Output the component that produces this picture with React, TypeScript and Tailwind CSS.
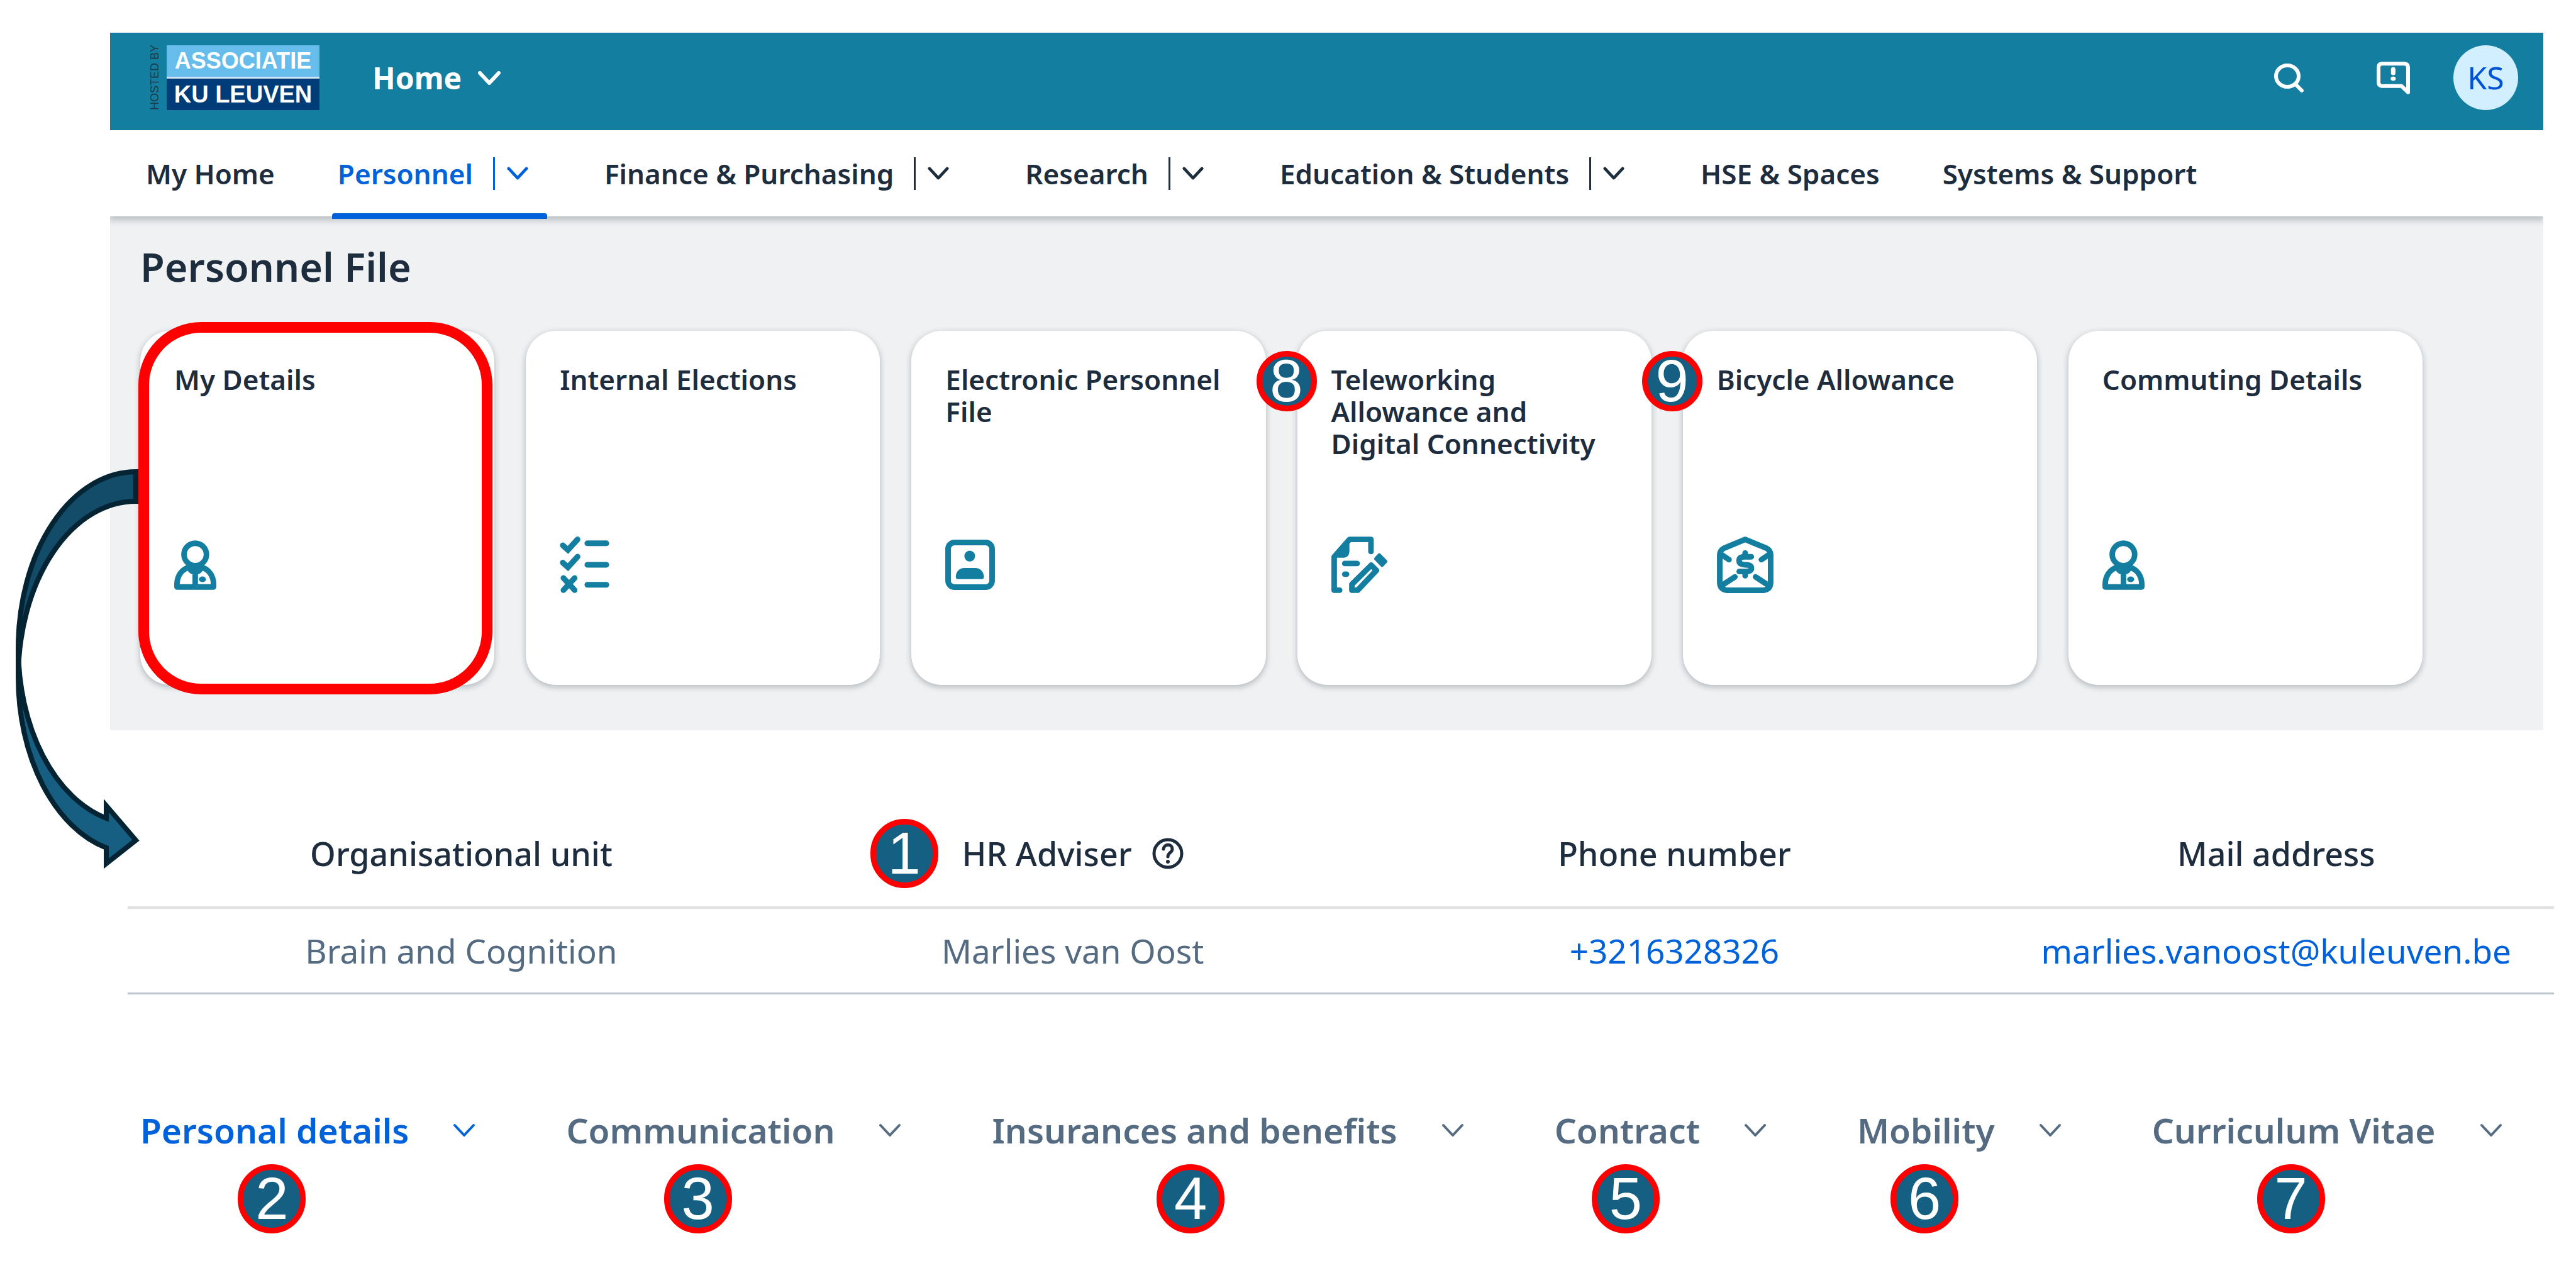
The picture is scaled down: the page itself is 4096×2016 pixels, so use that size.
import React from "react";

type IconProps = { className?: string };

function Chevron({ className = "" }: IconProps) {
  return (
    <svg viewBox="0 0 36 22" fill="none" stroke="currentColor" strokeLinecap="round" strokeLinejoin="round" className={className} aria-hidden="true">
      <path d="M3 3 L18 19 L33 3" />
    </svg>
  );
}

function SearchIcon() {
  return (
    <svg viewBox="0 0 48 46" className="h-[46px] w-[48px]" fill="none" stroke="white" strokeWidth="6" strokeLinecap="round" aria-hidden="true">
      <ellipse cx="21" cy="20" rx="18" ry="17" />
      <path d="M34 33 L44 43" />
    </svg>
  );
}

function FeedbackIcon() {
  return (
    <svg viewBox="200 205 298 290" className="h-[52px] w-[53px]" fill="none" stroke="white" strokeLinecap="round" strokeLinejoin="round" aria-hidden="true">
      <path strokeWidth="34" d="M245 222 H448 Q481 224 481 255 V478 L423 422 H245 Q217 418 217 385 V255 Q217 224 245 222 Z" />
      <path strokeWidth="40" d="M348 273 V305" />
      <ellipse cx="348" cy="356" rx="23" ry="19" fill="white" stroke="none" />
    </svg>
  );
}

function PersonIcon() {
  return (
    <svg viewBox="0 0 379 443" className="h-[79px] w-[67px]" fill="none" stroke="currentColor" strokeWidth="50" strokeLinejoin="round" aria-hidden="true">
      <circle cx="189" cy="126" r="101" />
      <path d="M25 418 V390 C27 318 66 262 128 243 H251 C313 262 352 318 354 390 V418 Z" />
      <path stroke="none" fill="currentColor" d="M105 225 H274 L256 272 Q238 298 212 304 H166 Q140 298 122 272 Z" />
      <path d="M189 290 V410" />
      <ellipse cx="254" cy="349" rx="32" ry="25" stroke="none" fill="currentColor" />
    </svg>
  );
}

function ChecklistIcon() {
  return (
    <svg viewBox="0 0 442 507" className="h-[90px] w-[79px]" fill="none" stroke="currentColor" strokeWidth="51" strokeLinecap="round" aria-hidden="true">
      <path d="M26 79 L72 120 L158 26 M26 234 L72 275 L158 181" />
      <path d="M32 372 L132 480 M132 372 L32 480" />
      <path d="M246 61 H416 M246 253 H416 M246 432 H416" />
    </svg>
  );
}

function ContactCardIcon() {
  return (
    <svg viewBox="0 0 442 448" className="h-[80px] w-[79px]" fill="none" stroke="currentColor" strokeWidth="50" aria-hidden="true">
      <rect x="25" y="25" width="392" height="398" rx="58" />
      <circle cx="218" cy="146" r="48" stroke="none" fill="currentColor" />
      <path stroke="none" fill="currentColor" d="M94 332 C94 284 128 252 168 252 H268 C308 252 344 284 344 332 Q344 352 324 352 H114 Q94 352 94 332 Z" />
    </svg>
  );
}

function EditPaperIcon() {
  return (
    <svg viewBox="0 0 508 506" className="h-[90px] w-[90px]" fill="none" stroke="currentColor" strokeWidth="50" strokeLinecap="round" strokeLinejoin="round" aria-hidden="true">
      <path d="M74 481 H25 V182 L162 25 H355 V134" />
      <path stroke="none" fill="currentColor" d="M25 190 L162 25 V135 Q158 184 115 190 Z" />
      <path d="M120 241 H231 M120 337 H136" />
      <path d="M357 256 L404 303 L236 481 H184 V428 Z" />
      <path fill="currentColor" strokeWidth="30" d="M430 165 L487 223 L455 257 L398 198 Z" />
    </svg>
  );
}

function MoneyEnvelopeIcon() {
  return (
    <svg viewBox="0 0 505 506" className="h-[90px] w-[90px]" fill="none" stroke="currentColor" strokeWidth="50" strokeLinecap="round" strokeLinejoin="round" aria-hidden="true">
      <path d="M25 162 Q27 122 62 105 L252 26 L443 105 Q478 122 480 162 V410 Q478 474 415 481 H90 Q27 474 25 410 Z" />
      <path d="M42 162 L108 207 M463 162 L397 207 M160 361 L48 434 M345 361 L457 434" />
      <path d="M307 181 H240 Q198 183 198 217 Q198 250 250 253 H265 Q308 256 308 284 Q308 312 255 313 H199 M252 147 V178 M252 316 V350" />
    </svg>
  );
}

function HelpIcon() {
  return (
    <svg viewBox="0 0 50 50" className="h-[50px] w-[50px]" fill="none" stroke="currentColor" strokeWidth="5" strokeLinecap="round" strokeLinejoin="round" aria-hidden="true">
      <circle cx="25" cy="25" r="22" />
      <path d="M18 18 C19 9 32 9 32 18 C32 24 25 23 25 30" />
      <circle cx="25" cy="38" r="3" fill="currentColor" stroke="none" />
    </svg>
  );
}

function Badge({ n, className }: { n: number; className: string }) {
  return (
    <span className={`absolute flex items-center justify-center rounded-full border-[9px] border-[#ff0000] bg-[#156082] font-['Liberation_Sans',sans-serif] text-[94px] leading-none font-normal text-white ${className}`}>
      {n}
    </span>
  );
}

function CurvedArrow() {
  return (
    <svg viewBox="0 740 240 660" className="absolute top-[740px] left-0 h-[660px] w-[240px]" stroke="#042433" strokeWidth="8" aria-hidden="true">
      <path fill="#165f82" d="M29 1030 V1077 A187 280 0 0 0 169 1348 V1373 L216 1336 L169 1281 V1301 A187 280 0 0 1 29 1030 Z" />
      <path fill="#124c69" d="M216 750 A187 280 0 0 0 29 1030 V1077 A187 280 0 0 1 216 797 Z" />
    </svg>
  );
}

const navItems = [
  { label: "My Home", menu: false },
  { label: "Personnel", menu: true, active: true },
  { label: "Finance & Purchasing", menu: true },
  { label: "Research", menu: true },
  { label: "Education & Students", menu: true },
  { label: "HSE & Spaces", menu: false },
  { label: "Systems & Support", menu: false },
];

const cards = [
  { title: "My Details", icon: <PersonIcon />, highlighted: true },
  { title: "Internal Elections", icon: <ChecklistIcon /> },
  { title: "Electronic Personnel File", icon: <ContactCardIcon /> },
  { title: "Teleworking Allowance and Digital Connectivity", icon: <EditPaperIcon />, badge: 8 },
  { title: "Bicycle Allowance", icon: <MoneyEnvelopeIcon />, badge: 9 },
  { title: "Commuting Details", icon: <PersonIcon /> },
];

const tabs = [
  { label: "Personal details", n: 2, active: true },
  { label: "Communication", n: 3 },
  { label: "Insurances and benefits", n: 4 },
  { label: "Contract", n: 5 },
  { label: "Mobility", n: 6 },
  { label: "Curriculum Vitae", n: 7 },
];

export default function App() {
  return (
    <div className="relative min-h-screen overflow-hidden bg-white pt-[52px] font-['Noto_Sans',sans-serif] text-[#1d2d3e]">
      <div className="mr-[52px] ml-[175px]">
        <header className="flex items-center bg-[#147ea1] pt-[20px] pr-[40px] pb-[32px] pl-[62px] text-white">
          <a href="#home" className="flex h-[103px] items-stretch gap-[10px] font-['Liberation_Sans',sans-serif]">
            <span className="rotate-180 text-center text-[18px] leading-[18px] whitespace-nowrap text-[#1f3a44] [writing-mode:vertical-rl]">HOSTED BY</span>
            <span className="flex w-[243px] flex-col text-center font-bold whitespace-nowrap">
              <span className="flex-1 border-b-[3px] border-[#cfe4f5] bg-[#66bcea] text-[36px] leading-[50px]">ASSOCIATIE</span>
              <span className="flex-1 bg-[#003d78] text-[38px] leading-[50px]">KU LEUVEN</span>
            </span>
          </a>
          <button className="ml-[84px] flex items-center gap-[26px] text-[48px] leading-[64px] font-bold">
            Home
            <Chevron className="h-[22px] w-[36px] stroke-[6]" />
          </button>
          <div className="ml-auto flex items-center">
            <button aria-label="Search"><SearchIcon /></button>
            <button aria-label="Feedback" className="ml-[115px]"><FeedbackIcon /></button>
            <button aria-label="Profile" className="ml-[69px] h-[103px] w-[103px] rounded-full bg-[#d1efff] text-[50px] text-[#0053d6]">KS</button>
          </div>
        </header>

        <nav className="relative z-10 flex h-[137px] gap-[82px] bg-white pl-[48px] text-[44px] font-semibold whitespace-nowrap shadow-[0_4px_10px_2px_rgba(80,95,105,0.35)] [clip-path:inset(0_0_-20px_0)]">
          {navItems.map((item) => (
            <div key={item.label} className={`relative flex items-center pl-[9px] ${item.menu ? "pr-[30px]" : "pr-[9px]"} ${item.active ? "text-[#0062da]" : ""}`}>
              <a href={`#${item.label}`}>{item.label}</a>
              {item.menu && (
                <button aria-label={`${item.label} menu`} className="ml-[32px] flex h-[52px] items-center border-l-[3px] border-current pl-[19px]">
                  <Chevron className="h-[21px] w-[34px] stroke-[5]" />
                </button>
              )}
              {item.active && <span className="absolute inset-x-0 -bottom-[4px] h-[9px] rounded-t-[4px] bg-[#0062da]" />}
            </div>
          ))}
        </nav>

        <section className="bg-[#eff1f3] pt-[50px] pr-[192px] pb-[72px] pl-[48px]">
          <h1 className="text-[63px] leading-[60px] font-semibold">Personnel File</h1>
          <div className="mt-[72px] grid grid-cols-6 gap-[50px]">
            {cards.map((card) => (
              <a
                key={card.title}
                href={`#${card.title}`}
                className="relative flex aspect-square flex-col justify-between rounded-[48px] bg-white px-[54px] pt-[52px] pb-[146px] shadow-[0_3px_8px_1px_rgba(80,95,105,0.35)]"
              >
                <h2 className="text-[44px] leading-[51px] font-semibold">{card.title}</h2>
                <span className="flex h-[90px] items-center text-[#147ea1]">{card.icon}</span>
                {card.highlighted && <span className="absolute -top-[14px] right-[3px] -bottom-[15px] -left-[3px] z-10 rounded-[100px] border-[17px] border-[#ff0000]" />}
                {card.badge && <Badge n={card.badge} className="top-[32px] -left-[65px] h-[96px] w-[96px]" />}
              </a>
            ))}
          </div>
        </section>
      </div>

      <CurvedArrow />

      <div className="mt-[112px] mr-[35px] ml-[203px]">
        <table className="w-full table-fixed border-separate border-spacing-0 text-center leading-[72px]">
          <colgroup>
            <col className="w-[27.5%]" />
            <col className="w-[22.9%]" />
            <col className="w-[26.7%]" />
            <col className="w-[22.9%]" />
          </colgroup>
          <thead>
            <tr className="h-[172px] text-[52px] [&>th]:border-b-[4px] [&>th]:border-[#e0e0e0] [&>th]:font-medium">
              <th>Organisational unit</th>
              <th>
                <span className="relative inline-flex items-center gap-[32px]">
                  <Badge n={1} className="right-full mr-[38px] h-[110px] w-[108px]" />
                  HR Adviser
                  <HelpIcon />
                </span>
              </th>
              <th>Phone number</th>
              <th>Mail address</th>
            </tr>
          </thead>
          <tbody>
            <tr className="h-[136px] text-[53px] text-[#556b82] [&>td]:border-b-[3px] [&>td]:border-[#b9c3cd]">
              <td>Brain and Cognition</td>
              <td>Marlies van Oost</td>
              <td><a href="tel:+3216328326" className="text-[#0062da]">+3216328326</a></td>
              <td><a href="mailto:marlies.vanoost@kuleuven.be" className="text-[#0062da]">marlies.vanoost@kuleuven.be</a></td>
            </tr>
          </tbody>
        </table>
      </div>

      <div className="mt-[180px] ml-[223px] flex gap-[144px] pb-[183px] text-[55px] leading-[72px] font-semibold whitespace-nowrap text-[#556b82]">
        {tabs.map((tab) => (
          <button key={tab.label} className={`flex items-center gap-[70px] ${tab.active ? "text-[#0062da]" : ""}`}>
            <span className="relative">
              {tab.label}
              <Badge n={tab.n} className="top-full left-[49%] mt-[18px] h-[110px] w-[108px] -translate-x-1/2" />
            </span>
            <Chevron className="h-[22px] w-[36px] stroke-[4]" />
          </button>
        ))}
      </div>
    </div>
  );
}
